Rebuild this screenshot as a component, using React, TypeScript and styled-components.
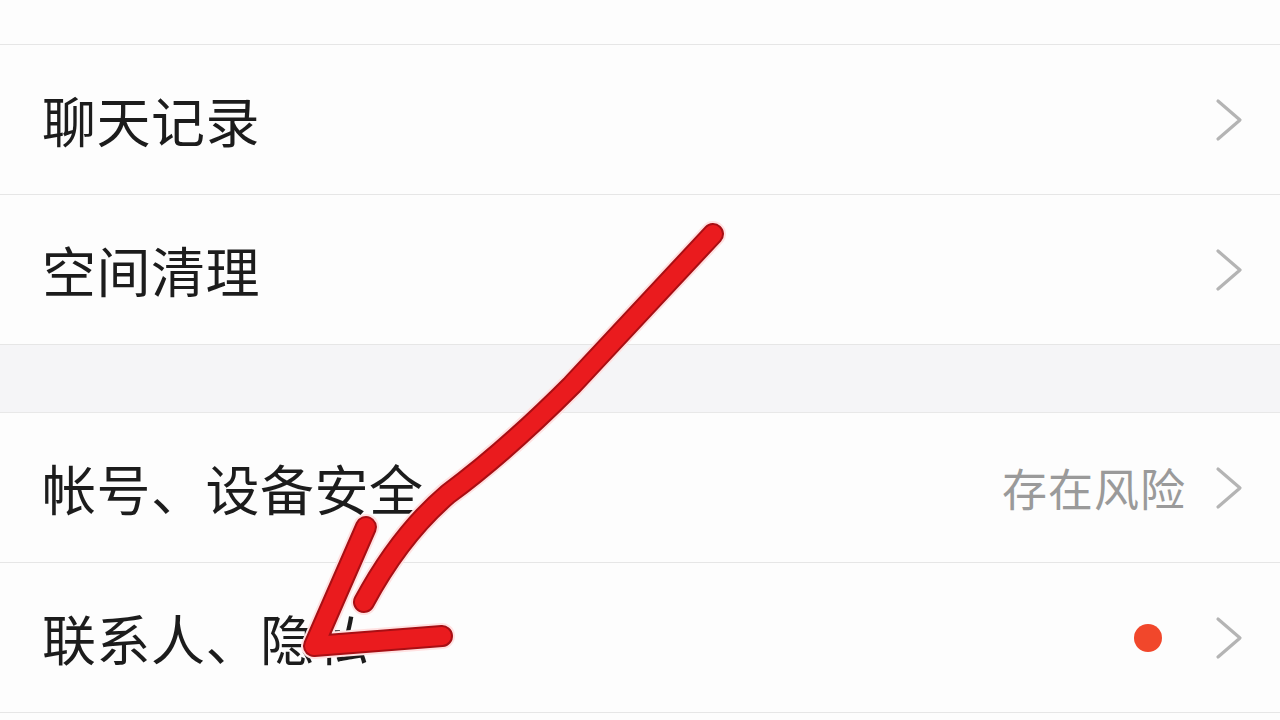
import React from 'react';
import styled, {createGlobalStyle} from 'styled-components';

const GlobalStyle = createGlobalStyle`
  html, body {
    margin: 0;
    padding: 0;
    background: #fcfcfc;
  }
  body {
    font-family: "Noto Sans CJK SC", "Noto Sans", sans-serif;
    overflow: hidden;
  }
`;

const Screen = styled.div`
  position: relative;
  width: 1280px;
  height: 720px;
  overflow: hidden;
  display: flex;
  flex-direction: column;
  background: #fcfcfc;
`;

const Group = styled.div`
  display: flex;
  flex-direction: column;
  background: #fdfdfd;
`;

const Row = styled.div<{ height?: number }>`
  height: ${props => props.height ?? 149}px;
  flex-shrink: 0;
  display: flex;
  align-items: center;
  padding: 0 36px 0 42px;
  border-bottom: 1px solid #e6e6e6;
  box-sizing: content-box;
`;

const Title = styled.span`
  flex: 1;
  font-size: 54px;
  color: #1c1c1c;
  letter-spacing: 0.5px;
  line-height: 1;
`;

const Value = styled.span`
  font-size: 45px;
  color: #9a9a9a;
  letter-spacing: 1px;
  margin-right: 28px;
  line-height: 1;
`;

const Dot = styled.span`
  width: 28px;
  height: 28px;
  border-radius: 50%;
  background: #f1472b;
  margin-right: 52px;
`;

const Gap = styled.div`
  height: 67px;
  flex-shrink: 0;
  background: #f5f5f7;
  border-bottom: 1px solid #e8e8e8;
`;

const Chevron = () => (
    <svg width="30" height="44" viewBox="0 0 30 44" fill="none">
        <path d="M4 3 L26 22 L4 41" stroke="#b4b4b4" strokeWidth="3.2" strokeLinecap="round" strokeLinejoin="round" />
    </svg>
);

const Overlay = styled.svg`
  position: absolute;
  left: 0;
  top: 0;
  pointer-events: none;
`;

// hand-drawn arrow pointing at the contacts row
const arrowPath = 'M713 234 L572 385 Q505 452 448 494 Q400 535 364 602';
const headPath = 'M366 527 L314 646 L442 636';

export default function App() {
    return (
        <Screen>
            <GlobalStyle />
            <Group>
                <Row height={44} />
                <Row>
                    <Title>聊天记录</Title>
                    <Chevron />
                </Row>
                <Row>
                    <Title>空间清理</Title>
                    <Chevron />
                </Row>
            </Group>
            <Gap />
            <Group>
                <Row>
                    <Title>帐号、设备安全</Title>
                    <Value>存在风险</Value>
                    <Chevron />
                </Row>
                <Row>
                    <Title>联系人、隐私</Title>
                    <Dot />
                    <Chevron />
                </Row>
                <Row height={60} />
            </Group>
            <Overlay width="1280" height="720" viewBox="0 0 1280 720">
                <g fill="none" strokeLinecap="round" strokeLinejoin="round">
                    <path d={arrowPath} stroke="#ffe1e1" strokeWidth="26" />
                    <path d={headPath} stroke="#ffe1e1" strokeWidth="26" />
                    <path d={arrowPath} stroke="#a80f14" strokeWidth="22" />
                    <path d={headPath} stroke="#a80f14" strokeWidth="22" />
                    <path d={arrowPath} stroke="#ea1b1e" strokeWidth="18" />
                    <path d={headPath} stroke="#ea1b1e" strokeWidth="18" />
                </g>
            </Overlay>
        </Screen>
    );
}
